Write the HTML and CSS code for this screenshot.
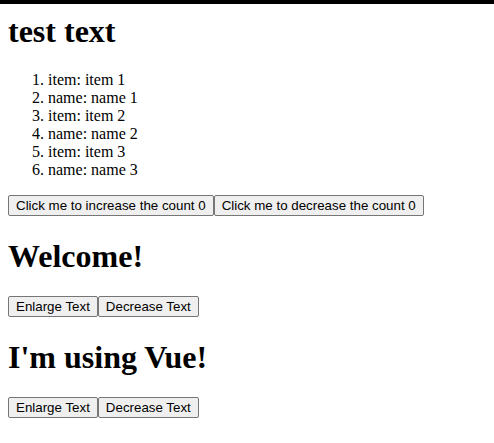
FILE: index.html
```html
<!DOCTYPE html>
<html>
<head>
<meta charset="utf-8">
<link rel="stylesheet" href="styles.css">
</head>
<body>
<div class="topbar"></div>
<main class="app">
<h1 class="title first">test text</h1>
<ol class="list">
<li>item: item 1</li>
<li>name: name 1</li>
<li>item: item 2</li>
<li>name: name 2</li>
<li>item: item 3</li>
<li>name: name 3</li>
</ol>
<div class="btns"><button class="btn">Click me to increase the count 0</button><button class="btn">Click me to decrease the count 0</button></div>
<h1 class="title">Welcome!</h1>
<div class="btns"><button class="btn">Enlarge Text</button><button class="btn">Decrease Text</button></div>
<h1 class="title">I'm using Vue!</h1>
<div class="btns"><button class="btn">Enlarge Text</button><button class="btn">Decrease Text</button></div>
</main>
</body>
</html>
```
FILE: styles.css
```css
html, body {
  background: #fff;
}
body {
  margin: 0;
  font-family: "Liberation Serif", "Times New Roman", serif;
  font-size: 16px;
  color: #000;
}
.topbar {
  height: 4px;
  background: #000;
}
.app {
  margin: 0 8px;
}
.title {
  font-size: 32px;
  font-weight: bold;
  margin: 21.44px 0;
}
.title.first {
  margin-top: 9px;
}
.list {
  margin: 16px 0;
  padding-left: 40px;
}
.btns {
  display: flex;
  align-items: flex-start;
}
.btn {
  font: 13.333px "Liberation Sans", Arial, sans-serif;
  line-height: 17px;
  height: 21px;
  color: #000;
  background: #efefef;
  border: 1px solid #767676;
  border-radius: 2px;
  padding: 1px 7px;
  margin: 0;
}
```
